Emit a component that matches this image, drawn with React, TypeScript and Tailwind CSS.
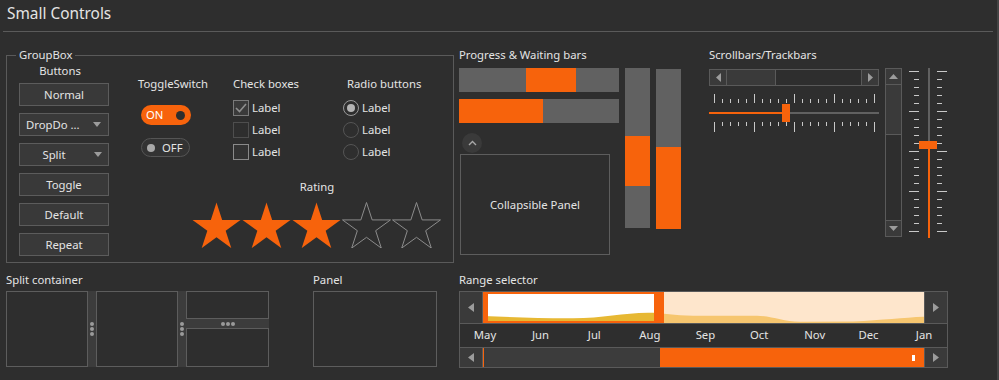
import React from "react";

const months = [
  { name: "May", day: 0 },
  { name: "Jun", day: 31 },
  { name: "Jul", day: 61 },
  { name: "Aug", day: 92 },
  { name: "Sep", day: 123 },
  { name: "Oct", day: 153 },
  { name: "Nov", day: 184 },
  { name: "Dec", day: 214 },
  { name: "Jan", day: 245 },
];

const wave =
  "M0,31 L0,24 C30,25 60,26.5 90,26.3 C120,26 140,21 165,20.7 C180,20.5 190,23.5 210,23.7 L274,23.7 C290,24 300,29.7 317,29.7 L370,29.5 C400,28 420,25.5 441,24.7 L441,31 Z";

function starPoints(cx: number, cy: number, R: number, r: number) {
  const pts: string[] = [];
  for (let i = 0; i < 10; i++) {
    const a = -Math.PI / 2 + (i * Math.PI) / 5;
    const rad = i % 2 === 0 ? R : r;
    pts.push(`${(cx + rad * Math.cos(a)).toFixed(2)},${(cy + rad * Math.sin(a)).toFixed(2)}`);
  }
  return pts.join(" ");
}

const Arrow = ({ dir, w = 6, h = 9 }: { dir: "left" | "right" | "up" | "down"; w?: number; h?: number }) => {
  const pts =
    dir === "left"
      ? `${w},0 0,${h / 2} ${w},${h}`
      : dir === "right"
      ? `0,0 ${w},${h / 2} 0,${h}`
      : dir === "up"
      ? `0,${h} ${w / 2},0 ${w},${h}`
      : `0,0 ${w},0 ${w / 2},${h}`;
  return (
    <svg width={w} height={h} viewBox={`0 0 ${w} ${h}`}>
      <polygon points={pts} fill="#9c9c9c" />
    </svg>
  );
};

const Dots = ({ vertical }: { vertical?: boolean }) => (
  <div className={vertical ? "flex flex-col gap-[1px]" : "flex gap-[1px]"}>
    <div className="w-[4px] h-[4px] rounded-full bg-[#9a9a9a]" />
    <div className="w-[4px] h-[4px] rounded-full bg-[#9a9a9a]" />
    <div className="w-[4px] h-[4px] rounded-full bg-[#9a9a9a]" />
  </div>
);

const Btn = ({ children, className = "" }: { children: React.ReactNode; className?: string }) => (
  <div className={`h-[23px] w-[90px] border border-[#5c5c5c] bg-[#393939] flex items-center ${className}`}>
    {children}
  </div>
);

const CheckRow = ({ box, label }: { box: React.ReactNode; label: string }) => (
  <div className="flex items-center h-[16px] gap-[3px]">
    {box}
    <span>{label}</span>
  </div>
);

const ticks = Array.from({ length: 21 }, (_, k) => k);

export default function App() {
  return (
    <div className="flex w-[999px] h-[380px] bg-[#2e2e2e] text-[#e4e4e4] overflow-hidden font-['Noto_Sans',sans-serif] text-[11.3px] leading-[16px]">
      <div className="w-[997px]">
        {/* Header */}
        <div className="mx-[3px] w-[990px] h-[32px] border-b border-[#5a5a5a] pl-[4px] pt-[3px] text-[15.4px] leading-[22px]">
          Small Controls
        </div>

        {/* Top row */}
        <div className="flex pt-[15px] h-[231px]">
          {/* GroupBox */}
          <fieldset className="ml-[6px] w-[448px] h-[216px] border border-[#5a5a5a] p-0 m-0">
            <legend className="ml-[9px] px-[3px] leading-[16px]">GroupBox</legend>
            <div className="flex">
              <div className="ml-[12px] w-[90px]">
                <div className="text-center pr-[8px] h-[16px]">Buttons</div>
                <div className="mt-[4px] flex flex-col gap-[7px]">
                  <Btn className="justify-center">Normal</Btn>
                  <Btn className="justify-between pl-[6px] pr-[7px]">
                    <span>DropDo ...</span>
                    <Arrow dir="down" w={8} h={5} />
                  </Btn>
                  <Btn>
                    <span className="w-[68px] text-center">Split</span>
                    <span className="ml-[6px]">
                      <Arrow dir="down" w={8} h={5} />
                    </span>
                  </Btn>
                  <Btn className="justify-center">Toggle</Btn>
                  <Btn className="justify-center">Default</Btn>
                  <Btn className="justify-center">Repeat</Btn>
                </div>
              </div>

              <div className="flex flex-col">
                <div className="flex">
                  {/* ToggleSwitch */}
                  <div className="ml-[29px] w-[95px] pt-[13px]">
                    <div>ToggleSwitch</div>
                    <div className="mt-[13px] ml-[3px] w-[50px] h-[20px] rounded-full bg-[#f7630c] flex items-center pl-[5px] pr-[6px] justify-between">
                      <span className="text-white">ON</span>
                      <div className="w-[9px] h-[9px] rounded-full bg-[#2e2e2e]" />
                    </div>
                    <div className="mt-[13px] ml-[3px] w-[49px] h-[19px] rounded-full border border-[#555] bg-[#333] flex items-center pl-[5px] gap-[7px]">
                      <div className="w-[8px] h-[8px] rounded-full bg-[#a8a8a8]" />
                      <span>OFF</span>
                    </div>
                  </div>

                  {/* Check boxes */}
                  <div className="w-[110px] pt-[13px]">
                    <div>Check boxes</div>
                    <div className="mt-[8px] flex flex-col gap-[6px]">
                      <CheckRow
                        label="Label"
                        box={
                          <div className="w-[16px] h-[16px] border border-[#7a7a7a] bg-[#3a3a3a] flex items-center justify-center">
                            <svg width="12" height="10" viewBox="0 0 12 10">
                              <polyline points="1,5 4.5,8.5 11,1" fill="none" stroke="#8e8e8e" strokeWidth="1.6" />
                            </svg>
                          </div>
                        }
                      />
                      <CheckRow label="Label" box={<div className="w-[16px] h-[16px] border border-[#4e4e4e]" />} />
                      <CheckRow label="Label" box={<div className="w-[16px] h-[16px] border border-[#8a8a8a] bg-[#333]" />} />
                    </div>
                  </div>

                  {/* Radio buttons */}
                  <div className="pt-[13px]">
                    <div className="pl-[4px]">Radio buttons</div>
                    <div className="mt-[8px] flex flex-col gap-[6px]">
                      <CheckRow
                        label="Label"
                        box={
                          <div className="w-[16px] h-[16px] rounded-full border border-[#9a9a9a] flex items-center justify-center">
                            <div className="w-[8px] h-[8px] rounded-full bg-[#b4b4b4]" />
                          </div>
                        }
                      />
                      <CheckRow label="Label" box={<div className="w-[16px] h-[16px] rounded-full border border-[#555]" />} />
                      <CheckRow label="Label" box={<div className="w-[16px] h-[16px] rounded-full border border-[#555]" />} />
                    </div>
                  </div>
                </div>

                {/* Rating */}
                <div className="ml-[83px] w-[250px] mt-[19px] flex flex-col items-center">
                  <div>Rating</div>
                  <div className="mt-[7px] flex">
                    {[0, 1, 2, 3, 4].map((i) => (
                      <svg key={i} width="50" height="46" viewBox="0 0 50 46">
                        <polygon
                          points={starPoints(24.5, 25.7, 25.2, 9.63)}
                          fill={i < 3 ? "#f7630c" : "none"}
                          stroke={i < 3 ? "none" : "#8c8c8c"}
                          strokeWidth="1"
                        />
                      </svg>
                    ))}
                  </div>
                </div>
              </div>
            </div>
          </fieldset>

          {/* Progress & Waiting bars */}
          <div className="ml-[5px] w-[222px]">
            <div className="whitespace-nowrap">Progress &amp; Waiting bars</div>
            <div className="flex mt-[5px]">
              <div className="w-[160px]">
                <div className="h-[24px] bg-[#616161] flex">
                  <div className="w-[67px]" />
                  <div className="w-[50px] bg-[#f7630c]" />
                </div>
                <div className="mt-[7px] h-[24px] bg-[#616161] flex">
                  <div className="w-[84px] bg-[#f7630c]" />
                </div>
                <div className="mt-[10px] ml-[3px] w-[20px] h-[20px] rounded-full bg-[#3a3a3a] flex items-center justify-center">
                  <svg width="9" height="6" viewBox="0 0 9 6">
                    <polyline points="1,5 4.5,1.5 8,5" fill="none" stroke="#a8a8a8" strokeWidth="1.4" />
                  </svg>
                </div>
                <div className="mt-[1px] ml-[1px] w-[150px] h-[101px] border border-[#5d5d5d] flex items-center justify-center">
                  Collapsible Panel
                </div>
              </div>
              <div className="ml-[6px] w-[25px] h-[160px] bg-[#616161] flex flex-col">
                <div className="h-[68px]" />
                <div className="h-[50px] bg-[#f7630c]" />
              </div>
              <div className="ml-[6px] mt-[1px] w-[25px] h-[160px] bg-[#616161] flex flex-col">
                <div className="h-[78px]" />
                <div className="flex-1 bg-[#f7630c]" />
              </div>
            </div>
          </div>

          {/* Scrollbars/Trackbars */}
          <div className="ml-[28px]">
            <div className="whitespace-nowrap">Scrollbars/Trackbars</div>
            <div className="flex mt-[5px]">
              <div className="w-[170px]">
                <div className="mt-[1px] h-[17px] w-[170px] border border-[#5a5a5a] flex">
                  <div className="w-[17px] bg-[#3a3a3a] border-r border-[#5a5a5a] flex items-center justify-center">
                    <Arrow dir="left" w={5} h={9} />
                  </div>
                  <div className="w-[49px] bg-[#3a3a3a] border-r border-[#5a5a5a]" />
                  <div className="flex-1" />
                  <div className="w-[17px] bg-[#3a3a3a] border-l border-[#5a5a5a] flex items-center justify-center">
                    <Arrow dir="right" w={5} h={9} />
                  </div>
                </div>
                <svg className="mt-[8px] block" width="170" height="38" viewBox="0 0 170 38">
                  {ticks.map((k) => (
                    <g key={k}>
                      <rect x={5 + 8 * k} y={k % 5 === 0 ? 0 : 5} width="1" height={k % 5 === 0 ? 9 : 4} fill="#c8c8c8" />
                      <rect x={5 + 8 * k} y="28" width="1" height={k % 5 === 0 ? 10 : 4} fill="#c8c8c8" />
                    </g>
                  ))}
                  <rect x="0" y="18" width="170" height="2" fill="#616161" />
                  <rect x="0" y="18" width="74" height="2" fill="#f7630c" />
                  <rect x="73" y="10" width="8" height="18" fill="#f7630c" />
                </svg>
              </div>
              <div className="ml-[6px] w-[17px] h-[169px] border border-[#5a5a5a] flex flex-col">
                <div className="h-[16px] bg-[#3a3a3a] border-b border-[#5a5a5a] flex items-center justify-center">
                  <Arrow dir="up" w={9} h={5} />
                </div>
                <div className="h-[50px] bg-[#3a3a3a] border-b border-[#5a5a5a]" />
                <div className="flex-1" />
                <div className="h-[16px] bg-[#3a3a3a] border-t border-[#5a5a5a] flex items-center justify-center">
                  <Arrow dir="down" w={9} h={5} />
                </div>
              </div>
              <svg className="ml-[7px] block" width="40" height="170" viewBox="0 0 40 170">
                {ticks.map((k) => (
                  <g key={k}>
                    <rect x={k % 5 === 0 ? 0 : 5} y={3 + 8 * k} width={k % 5 === 0 ? 10 : 5} height="1" fill="#c8c8c8" />
                    <rect x="28" y={3 + 8 * k} width={k % 5 === 0 ? 10 : 5} height="1" fill="#c8c8c8" />
                  </g>
                ))}
                <rect x="19" y="0" width="2" height="170" fill="#616161" />
                <rect x="19" y="80" width="2" height="90" fill="#f7630c" />
                <rect x="10" y="73" width="18" height="8" fill="#f7630c" />
              </svg>
            </div>
          </div>
        </div>

        {/* Bottom row */}
        <div className="flex pt-[9px]">
          {/* Split container */}
          <div className="ml-[6px]">
            <div>Split container</div>
            <div className="flex mt-[3px] h-[76px]">
              <div className="w-[82px] border border-[#5d5d5d]" />
              <div className="w-[8px] bg-[#3c3c3c] flex items-center justify-center">
                <Dots vertical />
              </div>
              <div className="w-[82px] border border-[#5d5d5d]" />
              <div className="w-[8px] bg-[#3c3c3c] flex items-center justify-center">
                <Dots vertical />
              </div>
              <div className="w-[83px] flex flex-col">
                <div className="h-[28px] border border-[#5d5d5d]" />
                <div className="h-[9px] bg-[#3c3c3c] flex items-center justify-center">
                  <Dots />
                </div>
                <div className="flex-1 border border-[#5d5d5d]" />
              </div>
            </div>
          </div>

          {/* Panel */}
          <div className="ml-[44px]">
            <div>Panel</div>
            <div className="mt-[3px] w-[124px] h-[76px] border border-[#5d5d5d]" />
          </div>

          {/* Range selector */}
          <div className="ml-[22px]">
            <div>Range selector</div>
            <div className="mt-[3px] w-[489px] h-[77px] border border-[#5a5a5a] flex flex-col">
              <div className="h-[32px] flex border-b border-[#5a5a5a]">
                <div className="w-[23px] bg-[#3a3a3a] border-r border-[#5a5a5a] flex items-center justify-center">
                  <Arrow dir="left" w={6} h={9} />
                </div>
                <svg className="block" width="441" height="31" viewBox="0 0 441 31">
                  <defs>
                    <clipPath id="sel">
                      <rect x="0" y="0" width="181" height="31" />
                    </clipPath>
                  </defs>
                  <rect x="0" y="0" width="441" height="31" fill="#fee6cc" />
                  <path d={wave} fill="#f6c66f" />
                  <rect x="0" y="0" width="181" height="31" fill="#ffffff" />
                  <path d={wave} fill="#e7b833" clipPath="url(#sel)" />
                  <rect x="0" y="0" width="5" height="31" fill="#f7630c" />
                  <rect x="0" y="0" width="181" height="2" fill="#f7630c" />
                  <rect x="0" y="29" width="181" height="2" fill="#f7630c" />
                  <rect x="171" y="0" width="10" height="31" fill="#f7630c" />
                </svg>
                <div className="w-[23px] bg-[#3a3a3a] border-l border-[#5a5a5a] flex items-center justify-center">
                  <Arrow dir="right" w={6} h={9} />
                </div>
              </div>
              <div className="h-[24px] border-b border-[#5a5a5a] relative">
                {months.map((m) => (
                  <span
                    key={m.name}
                    className="absolute top-[3px] -translate-x-1/2"
                    style={{ left: 23 + 2 + m.day * 1.792 }}
                  >
                    {m.name}
                  </span>
                ))}
              </div>
              <div className="flex-1 flex">
                <div className="w-[23px] bg-[#3a3a3a] border-r border-[#5a5a5a] flex items-center justify-center">
                  <Arrow dir="left" w={6} h={9} />
                </div>
                <div className="w-[441px] flex">
                  <div className="w-[177px] bg-[#3c3c3c] border-l border-[#f7630c]" />
                  <div className="flex-1 bg-[#f7630c] flex items-center justify-end pr-[9px]">
                    <div className="w-[3px] h-[6px] bg-white" />
                  </div>
                </div>
                <div className="w-[23px] bg-[#3a3a3a] border-l border-[#5a5a5a] flex items-center justify-center">
                  <Arrow dir="right" w={6} h={9} />
                </div>
              </div>
            </div>
          </div>
        </div>
      </div>
      <div className="w-[2px] h-full bg-[#444]" />
    </div>
  );
}
